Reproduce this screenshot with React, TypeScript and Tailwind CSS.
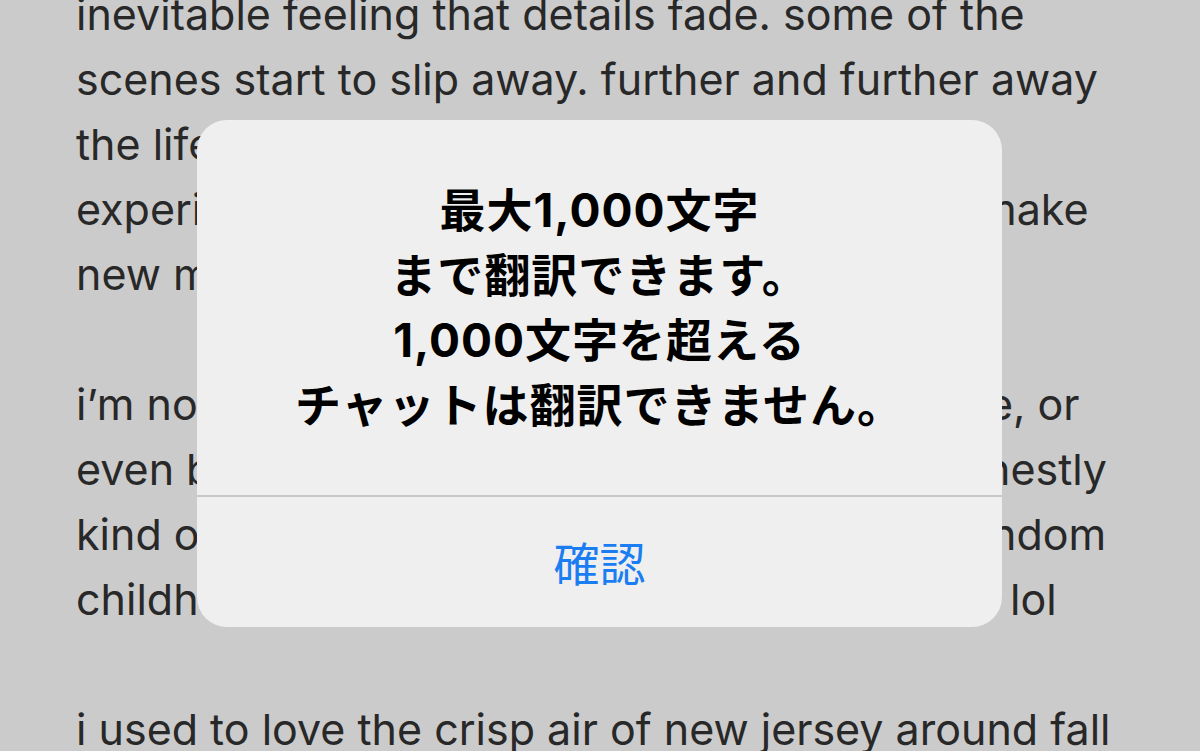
import React from 'react';

// 背後の本文（モーダルに隠れる部分も含めて1行ずつ）
const BodyLine: React.FC<{ children: React.ReactNode }> = ({ children }) => (
    <div className="flex h-[65px] items-center whitespace-nowrap">{children}</div>
);

export default function App() {
    return (
        <div
            className="relative h-[751px] w-[1200px] overflow-hidden bg-[#cbcbcb]"
            style={{ fontFamily: 'Inter, "Noto Sans CJK JP", sans-serif' }}
        >
            {/* 本文 */}
            <div className="-mt-[18px] pl-[76px] text-[43px] text-[#282828]">
                <BodyLine>inevitable feeling that details fade. some of the</BodyLine>
                <BodyLine>scenes start to slip away. further and further away</BodyLine>
                <BodyLine>the life i lived there feels, and the more</BodyLine>
                <BodyLine>
                    <span className="w-[903px] overflow-hidden">experiences i have elsewhere, the more i</span>
                    <span>make</span>
                </BodyLine>
                <BodyLine>new memories.</BodyLine>
                <BodyLine>&nbsp;</BodyLine>
                <BodyLine>
                    <span className="w-[912px] overflow-hidden">i&rsquo;m not sure if i&rsquo;ll ever go back to live ther</span>
                    <span>e, or</span>
                </BodyLine>
                <BodyLine>
                    <span className="w-[909px] overflow-hidden">even back to visit for that matter, but i&rsquo;m ho</span>
                    <span>nestly</span>
                </BodyLine>
                <BodyLine>
                    <span className="w-[915px] overflow-hidden">kind of glad i got to write down some of these ra</span>
                    <span>ndom</span>
                </BodyLine>
                <BodyLine>
                    <span className="w-[934px] overflow-hidden">childhood memories before i forget them all</span>
                    <span>lol</span>
                </BodyLine>
                <BodyLine>&nbsp;</BodyLine>
                <BodyLine>i used to love the crisp air of new jersey around fall</BodyLine>
            </div>

            {/* アラート */}
            <div className="absolute left-[197px] top-[120px] flex h-[507px] w-[805px] flex-col overflow-hidden rounded-[30px] bg-[#efefef]">
                <div className="flex h-[375px] items-center justify-center">
                    <p className="text-center text-[46px] font-bold leading-[65px] tracking-[1px] text-black">
                        最大1,000文字
                        <br />
                        まで翻訳できます。
                        <br />
                        1,000文字を超える
                        <br />
                        チャットは翻訳できません。
                    </p>
                </div>
                <div className="h-[2px] bg-[#c8c8c8]" />
                <button className="flex flex-1 items-center justify-center pt-[4px] text-[46px] text-[#1a7ef2]">
                    確認
                </button>
            </div>
        </div>
    );
}
